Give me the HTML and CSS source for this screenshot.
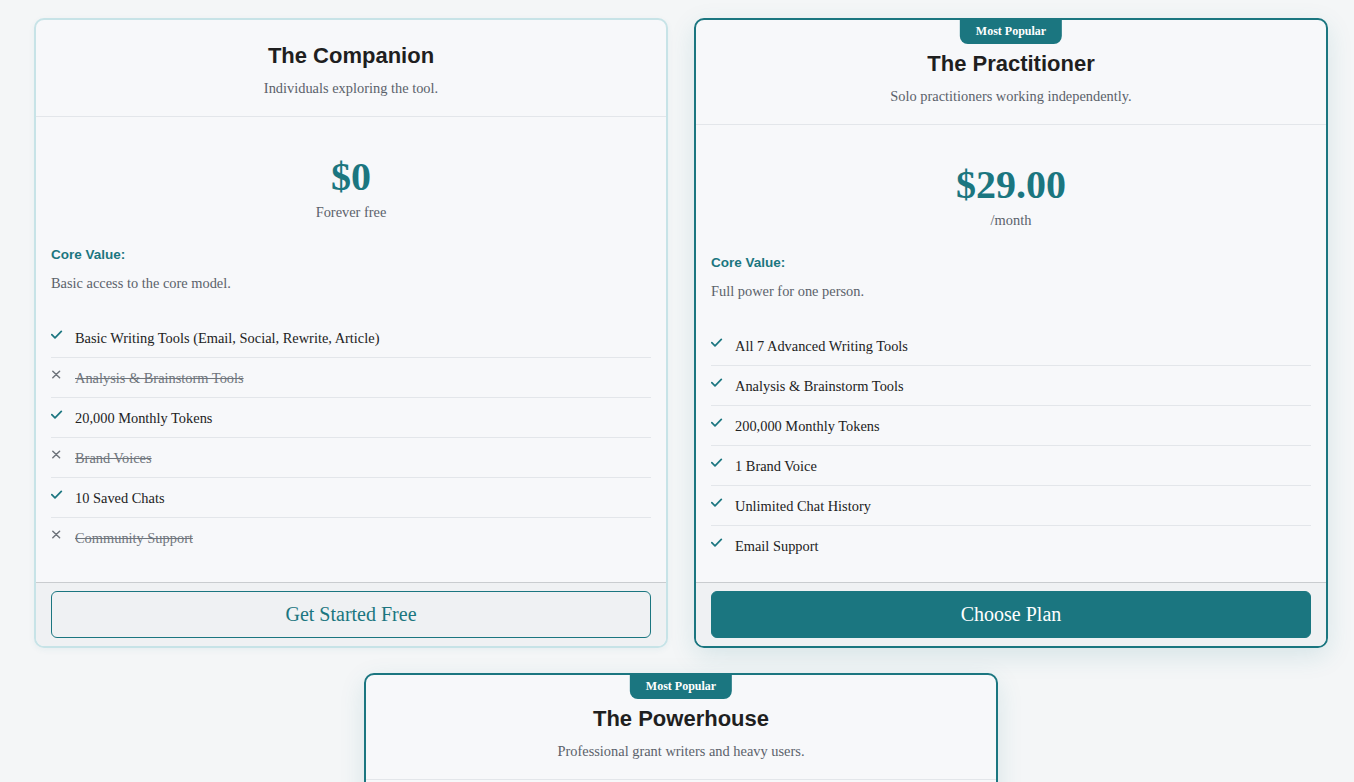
FILE: index.html
```html
<!DOCTYPE html>
<html lang="en">
<head>
<meta charset="utf-8">
<title>Pricing</title>
<link rel="stylesheet" href="styles.css">
</head>
<body>
<div class="plans">
  <div class="card">
    <div class="card-header">
      <h2 class="plan-name">The Companion</h2>
      <p class="plan-sub">Individuals exploring the tool.</p>
    </div>
    <div class="card-body">
      <div class="price-block">
        <div class="price">$0</div>
        <div class="period">Forever free</div>
      </div>
      <div class="core-label">Core Value:</div>
      <p class="core-desc">Basic access to the core model.</p>
      <ul class="features">
        <li><svg class="ic" viewBox="0 0 12 12"><path d="M0.8 5.6 L4 8.8 L10.3 2.4" class="chk"/></svg><span>Basic Writing Tools (Email, Social, Rewrite, Article)</span></li>
        <li class="off"><svg class="ic" viewBox="0 0 12 12"><path d="M1.8 2.2 L8.6 8.8 M8.6 2.2 L1.8 8.8" class="x"/></svg><span>Analysis &amp; Brainstorm Tools</span></li>
        <li><svg class="ic" viewBox="0 0 12 12"><path d="M0.8 5.6 L4 8.8 L10.3 2.4" class="chk"/></svg><span>20,000 Monthly Tokens</span></li>
        <li class="off"><svg class="ic" viewBox="0 0 12 12"><path d="M1.8 2.2 L8.6 8.8 M8.6 2.2 L1.8 8.8" class="x"/></svg><span>Brand Voices</span></li>
        <li><svg class="ic" viewBox="0 0 12 12"><path d="M0.8 5.6 L4 8.8 L10.3 2.4" class="chk"/></svg><span>10 Saved Chats</span></li>
        <li class="off"><svg class="ic" viewBox="0 0 12 12"><path d="M1.8 2.2 L8.6 8.8 M8.6 2.2 L1.8 8.8" class="x"/></svg><span>Community Support</span></li>
      </ul>
    </div>
    <div class="card-footer">
      <button class="btn btn-outline">Get Started Free</button>
    </div>
  </div>

  <div class="card popular">
    <div class="badge">Most Popular</div>
    <div class="card-header">
      <h2 class="plan-name">The Practitioner</h2>
      <p class="plan-sub">Solo practitioners working independently.</p>
    </div>
    <div class="card-body">
      <div class="price-block">
        <div class="price">$29.00</div>
        <div class="period">/month</div>
      </div>
      <div class="core-label">Core Value:</div>
      <p class="core-desc">Full power for one person.</p>
      <ul class="features">
        <li><svg class="ic" viewBox="0 0 12 12"><path d="M0.8 5.6 L4 8.8 L10.3 2.4" class="chk"/></svg><span>All 7 Advanced Writing Tools</span></li>
        <li><svg class="ic" viewBox="0 0 12 12"><path d="M0.8 5.6 L4 8.8 L10.3 2.4" class="chk"/></svg><span>Analysis &amp; Brainstorm Tools</span></li>
        <li><svg class="ic" viewBox="0 0 12 12"><path d="M0.8 5.6 L4 8.8 L10.3 2.4" class="chk"/></svg><span>200,000 Monthly Tokens</span></li>
        <li><svg class="ic" viewBox="0 0 12 12"><path d="M0.8 5.6 L4 8.8 L10.3 2.4" class="chk"/></svg><span>1 Brand Voice</span></li>
        <li><svg class="ic" viewBox="0 0 12 12"><path d="M0.8 5.6 L4 8.8 L10.3 2.4" class="chk"/></svg><span>Unlimited Chat History</span></li>
        <li><svg class="ic" viewBox="0 0 12 12"><path d="M0.8 5.6 L4 8.8 L10.3 2.4" class="chk"/></svg><span>Email Support</span></li>
      </ul>
    </div>
    <div class="card-footer">
      <button class="btn btn-solid">Choose Plan</button>
    </div>
  </div>

  <div class="card popular">
    <div class="badge">Most Popular</div>
    <div class="card-header">
      <h2 class="plan-name">The Powerhouse</h2>
      <p class="plan-sub">Professional grant writers and heavy users.</p>
    </div>
    <div class="card-body">
      <div class="price-block">
        <div class="price">$79.00</div>
        <div class="period">/month</div>
      </div>
      <div class="core-label">Core Value:</div>
      <p class="core-desc">Maximum capacity for professionals.</p>
    </div>
  </div>
</div>
</body>
</html>
```

FILE: styles.css
```css
html, body {
  margin: 0;
  padding: 0;
  background: #f4f6f7;
  font-family: "Liberation Serif", "Times New Roman", serif;
  color: #222;
}

.plans {
  width: 1294px;
  margin-left: 34px;
  padding-top: 18px;
  display: flex;
  flex-wrap: wrap;
  justify-content: center;
  column-gap: 26px;
  row-gap: 25px;
}

.card {
  position: relative;
  box-sizing: border-box;
  width: 634px;
  display: flex;
  flex-direction: column;
  background: #f7f8fa;
  border: 2px solid #c7e3e7;
  border-radius: 10px;
  box-shadow: 0 2px 6px rgba(27, 118, 128, 0.06);
  overflow: hidden;
}

.card.popular {
  border-color: #1b7680;
  box-shadow: 0 8px 26px rgba(27, 118, 128, 0.13);
  overflow: visible;
}

.badge {
  position: absolute;
  top: -2px;
  left: 50%;
  transform: translateX(-50%);
  background: #1b7680;
  color: #fff;
  font-weight: bold;
  font-size: 12px;
  line-height: 14px;
  padding: 6px 16px;
  border-radius: 0 0 8px 8px;
  white-space: nowrap;
}

.card-header {
  padding: 23px 16px 17px;
  text-align: center;
  border-bottom: 1px solid #e3e6ea;
}

.popular .card-header {
  padding-top: 31px;
}

.plan-name {
  margin: 0 0 9px;
  font-family: "Liberation Sans", Arial, sans-serif;
  font-size: 22px;
  line-height: 26px;
  font-weight: bold;
  color: #1f1f1f;
}

.plan-sub {
  margin: 0;
  font-size: 14.4px;
  line-height: 21px;
  color: #5b626b;
}

.card-body {
  flex: 1;
  padding: 16px 15px 17px;
}

.price-block {
  margin-top: 20px;
  text-align: center;
}

.price {
  font-size: 40px;
  line-height: 48px;
  font-weight: bold;
  color: #1b7680;
}

.period {
  margin-top: 1px;
  font-size: 14.4px;
  line-height: 20px;
  color: #5b626b;
}

.core-label {
  margin-top: 24px;
  font-family: "Liberation Sans", Arial, sans-serif;
  font-size: 13.5px;
  line-height: 18px;
  font-weight: bold;
  color: #1b7680;
}

.core-desc {
  margin: 9px 0 0;
  font-size: 14.4px;
  line-height: 20px;
  color: #5b626b;
}

.features {
  list-style: none;
  margin: 25px 0 0;
  padding: 0;
}

.features li {
  display: flex;
  align-items: flex-start;
  padding: 10px 0 9px;
  font-size: 14.4px;
  line-height: 20px;
  color: #222;
}

.features li:not(:last-child) {
  border-bottom: 1px solid #e3e6ea;
}

.features li.off span {
  color: #6f757c;
  text-decoration: line-through;
}

.ic {
  flex: none;
  width: 12px;
  height: 12px;
  margin-top: 1px;
  margin-right: 12px;
}

.chk {
  fill: none;
  stroke: #1b7680;
  stroke-width: 1.7;
  stroke-linecap: round;
  stroke-linejoin: round;
}

.x {
  fill: none;
  stroke: #6f757c;
  stroke-width: 1.5;
  stroke-linecap: round;
}

.card-footer {
  padding: 8px 15px;
  background: #eff1f3;
  border-top: 1px solid #c9cccf;
  border-radius: 0 0 8px 8px;
}

.btn {
  display: block;
  box-sizing: border-box;
  width: 100%;
  height: 47px;
  border-radius: 6px;
  font-family: "Liberation Serif", "Times New Roman", serif;
  font-size: 20px;
  cursor: pointer;
}

.btn-outline {
  background: #eff1f3;
  color: #1b7680;
  border: 1px solid #1b7680;
}

.btn-solid {
  background: #1b7680;
  color: #fff;
  border: 1px solid #1b7680;
}
```
